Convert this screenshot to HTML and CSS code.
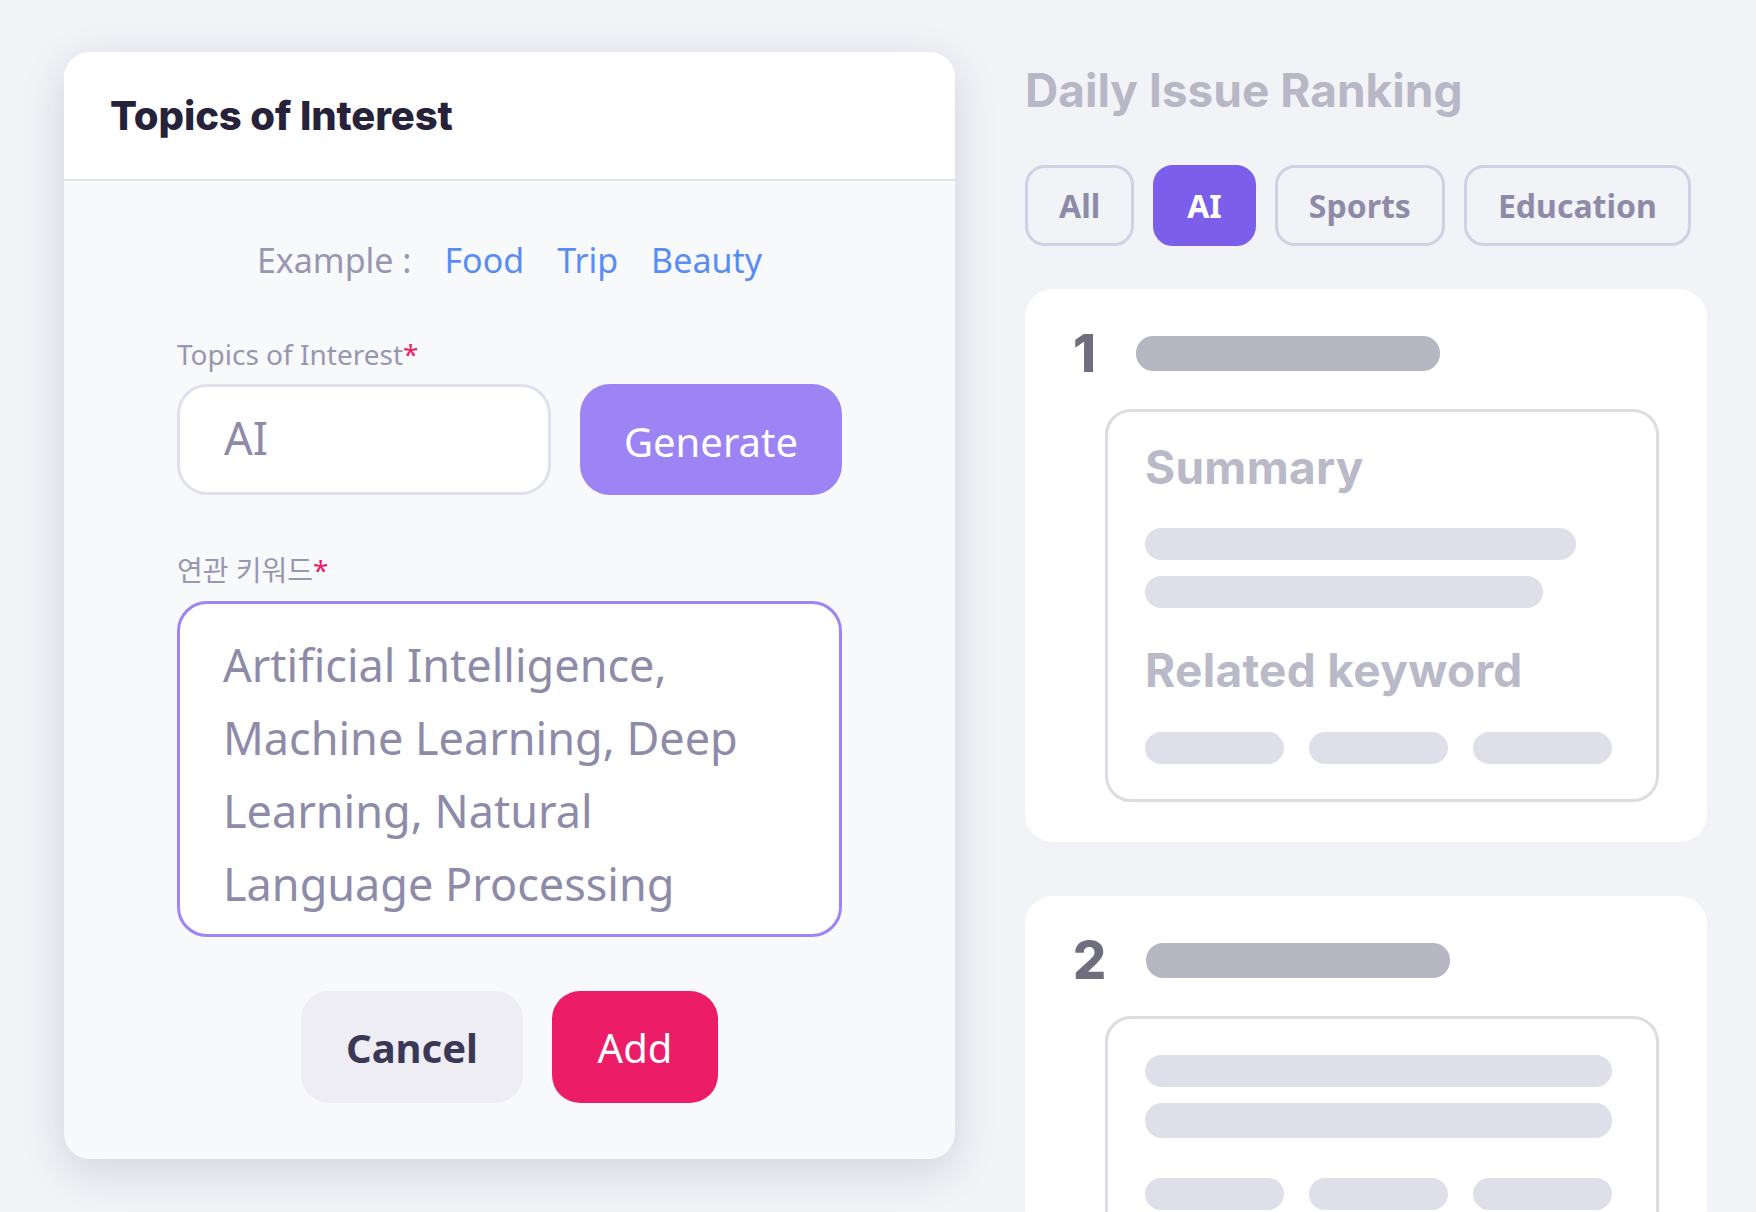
FILE: index.html
```html
<!DOCTYPE html>
<html lang="ko">
<head>
    <meta charset="UTF-8">
    <meta name="viewport" content="width=device-width, initial-scale=1.0">
    <title>Topics of Interest</title>
    <link rel="stylesheet" href="styles.css">
</head>
<body>
  <div class="page">
    <!-- Modal de temas -->
    <section class="modal">
      <div class="modal-header">
        <h2>Topics of Interest</h2>
      </div>
      <div class="modal-body">
        <div class="examples">
          <span class="examples-label">Example :</span>
          <a href="#">Food</a>
          <a href="#">Trip</a>
          <a href="#">Beauty</a>
        </div>

        <label class="field-label">Topics of Interest<span class="req">*</span></label>
        <div class="topic-row">
          <div class="topic-input">AI</div>
          <button class="btn-generate">Generate</button>
        </div>

        <label class="field-label label-kr">연관 키워드<span class="req">*</span></label>
        <div class="keywords-box">Artificial Intelligence, Machine Learning, Deep Learning, Natural Language Processing</div>

        <div class="modal-actions">
          <button class="btn-cancel">Cancel</button>
          <button class="btn-add">Add</button>
        </div>
      </div>
    </section>

    <!-- Ranking -->
    <section class="ranking">
      <h2 class="ranking-title">Daily Issue Ranking</h2>
      <div class="tabs">
        <button class="tab">All</button>
        <button class="tab active">AI</button>
        <button class="tab">Sports</button>
        <button class="tab">Education</button>
      </div>

      <div class="rank-card">
        <div class="rank-head">
          <span class="rank-num">1</span>
          <span class="bar bar-title"></span>
        </div>
        <div class="rank-inner">
          <h3>Summary</h3>
          <span class="bar bar-line w1"></span>
          <span class="bar bar-line w2"></span>
          <h3 class="kw-title">Related keyword</h3>
          <div class="chips">
            <span class="bar chip"></span>
            <span class="bar chip"></span>
            <span class="bar chip"></span>
          </div>
        </div>
      </div>

      <div class="rank-card">
        <div class="rank-head">
          <span class="rank-num">2</span>
          <span class="bar bar-title"></span>
        </div>
        <div class="rank-inner inner-plain">
          <span class="bar bar-line full"></span>
          <span class="bar bar-line full tall"></span>
          <div class="chips chips-spaced">
            <span class="bar chip"></span>
            <span class="bar chip"></span>
            <span class="bar chip"></span>
          </div>
        </div>
      </div>
    </section>
  </div>
</body>
</html>
```

FILE: styles.css
```css
/* Estilos generales */
body {
    margin: 0;
    padding: 0;
    background-color: #f2f3f7;
    font-family: 'Noto Sans', 'Noto Sans CJK KR', sans-serif;
    color: #333;
    overflow: hidden;
}

.page {
    display: flex;
    align-items: flex-start;
    gap: 70px;
    padding-left: 64px;
    height: 1212px;
}

button {
    font-family: inherit;
    cursor: pointer;
}

/* Modal */
.modal {
    width: 891px;
    margin-top: 52px;
    border-radius: 26px;
    background-color: #f8f9fb;
    box-shadow: 0 12px 44px rgba(30, 30, 60, 0.14);
    overflow: hidden;
}

.modal-header {
    height: 127px;
    display: flex;
    align-items: center;
    padding-left: 46px;
    background-color: #fff;
    border-bottom: 2px solid #e1e0ec;
}

.modal-header h2 {
    margin: 0;
    font-family: 'Inter', sans-serif;
    font-size: 40px;
    font-weight: 800;
    letter-spacing: -0.1px;
    color: #25223a;
}

.modal-body {
    padding: 57px 113px 56px;
}

.examples {
    display: flex;
    justify-content: center;
    gap: 33px;
    font-size: 34px;
    line-height: 44px;
    margin-bottom: 54px;
}

.examples-label {
    color: #9896b0;
}

.examples a {
    color: #5a8cf6;
    text-decoration: none;
}

.field-label {
    display: block;
    font-size: 28px;
    line-height: 36px;
    color: #9896b0;
    margin-bottom: 12px;
}

.label-kr {
    margin-bottom: 13px;
}

.req {
    color: #ec1c67;
}

.topic-row {
    display: flex;
    gap: 29px;
    margin-bottom: 57px;
}

.topic-input {
    width: 374px;
    height: 111px;
    box-sizing: border-box;
    display: flex;
    align-items: center;
    padding-left: 44px;
    padding-bottom: 4px;
    background: #fff;
    border: 3px solid #e1e0ee;
    border-radius: 30px;
    font-size: 45px;
    color: #8e8ba8;
}

.btn-generate {
    width: 262px;
    height: 111px;
    border: none;
    border-radius: 30px;
    background-color: #9d84f5;
    color: #fff;
    font-size: 40px;
    padding-top: 4px;
}

.keywords-box {
    height: 336px;
    box-sizing: border-box;
    padding: 24px 50px 0 43px;
    background: #fff;
    border: 3px solid #9e85f3;
    border-radius: 30px;
    font-size: 45px;
    line-height: 73px;
    color: #8e8ba8;
}

.modal-actions {
    display: flex;
    justify-content: center;
    gap: 29px;
    margin-top: 54px;
}

.btn-cancel,
.btn-add {
    height: 112px;
    border: none;
    border-radius: 28px;
    font-size: 40px;
}

.btn-cancel {
    width: 222px;
    background-color: #eeedf3;
    color: #3b3857;
    font-weight: 700;
}

.btn-add {
    width: 166px;
    background-color: #ec1c67;
    color: #fff;
}

/* Ranking */
.ranking {
    width: 682px;
    margin-top: 60px;
}

.ranking-title {
    margin: 0;
    font-family: 'Inter', sans-serif;
    font-size: 46px;
    line-height: 60px;
    font-weight: 700;
    color: #b8b7c6;
}

.tabs {
    display: flex;
    gap: 19px;
    margin-top: 45px;
}

.tab {
    height: 81px;
    padding: 0 31px;
    background: transparent;
    border: 3px solid #d3d0e5;
    border-radius: 20px;
    font-size: 32px;
    font-weight: 700;
    color: #8e8ba8;
}

.tab.active {
    background-color: #7b5fea;
    border-color: #7b5fea;
    color: #fff;
}

.rank-card {
    margin-top: 43px;
    padding: 47px 48px 40px;
    background: #fff;
    border-radius: 28px;
}

.rank-card + .rank-card {
    margin-top: 54px;
}

.rank-head {
    display: flex;
    align-items: center;
    gap: 40px;
    height: 35px;
}

.rank-num {
    font-family: 'Inter', sans-serif;
    font-size: 52px;
    font-weight: 800;
    color: #6f6e7e;
    line-height: 1;
}

.bar {
    display: block;
    border-radius: 17px;
    background-color: #dfdfea;
}

.bar-title {
    width: 304px;
    height: 35px;
    background-color: #b7b7c4;
}

.rank-inner {
    margin-top: 38px;
    margin-left: 32px;
    padding: 27px 37px 35px;
    border: 3px solid #dcdce3;
    border-radius: 26px;
}

.inner-plain {
    padding-top: 36px;
}

.rank-inner h3 {
    margin: 0;
    font-family: 'Inter', sans-serif;
    font-size: 46px;
    line-height: 56px;
    font-weight: 700;
    letter-spacing: 0.3px;
    color: #bab9c8;
}

.bar-line {
    height: 32px;
    margin-top: 16px;
}

.rank-inner h3 + .bar-line {
    margin-top: 33px;
}

.w1 { width: 431px; }
.w2 { width: 398px; }
.full { width: 467px; margin-top: 0; }
.full + .full { margin-top: 16px; }
.tall { height: 35px; }

.rank-inner h3.kw-title {
    margin-top: 34px;
}

.chips {
    display: flex;
    gap: 25px;
    margin-top: 34px;
}

.chips-spaced {
    margin-top: 40px;
}

.chip {
    width: 139px;
    height: 32px;
}
```
